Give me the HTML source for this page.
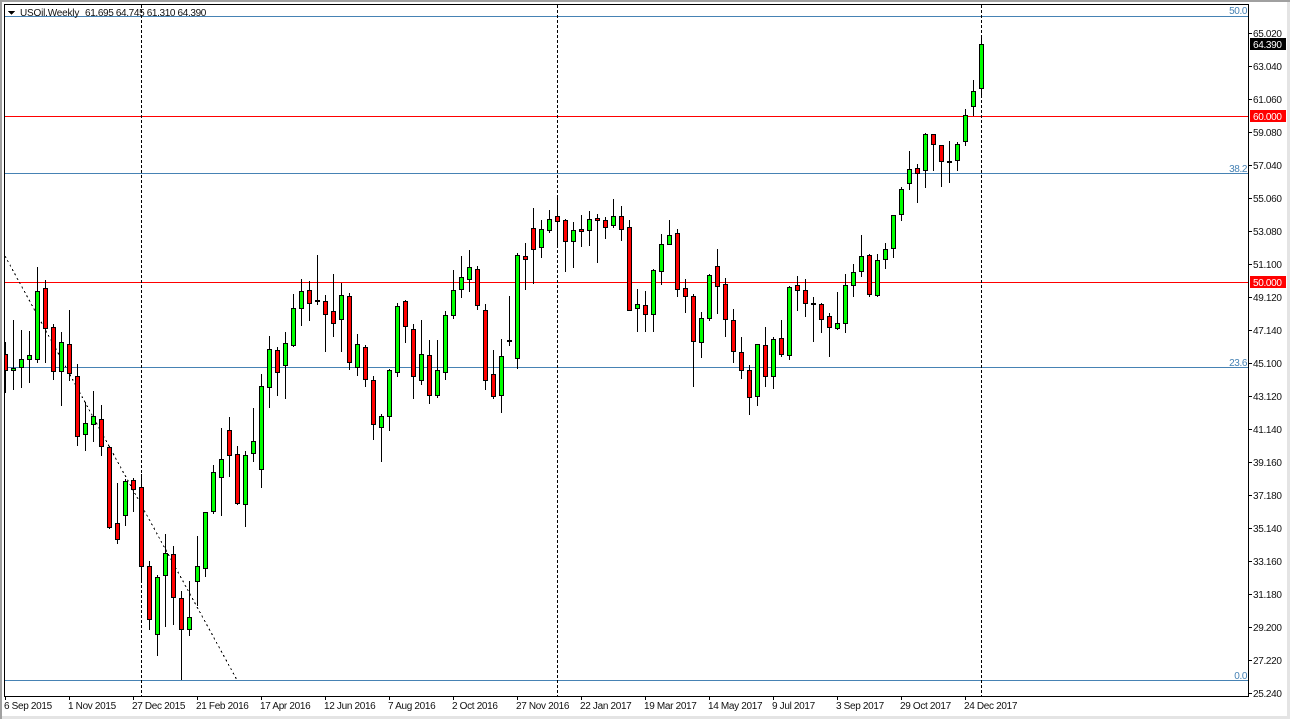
<!DOCTYPE html>
<html><head><meta charset="utf-8"><title>USOil Weekly</title>
<style>
html,body{margin:0;padding:0;background:#fff;width:1290px;height:719px;overflow:hidden}
svg{display:block}
text{font-family:"Liberation Sans",sans-serif;font-size:10px;letter-spacing:-.33px;fill:#111}
.f{fill:#4682b4;text-anchor:end;letter-spacing:-.4px}
.w{fill:#fff}
</style></head><body>
<svg width="1290" height="719" viewBox="0 0 1290 719" xmlns="http://www.w3.org/2000/svg">
<defs><clipPath id="c"><rect x="5" y="5" width="1243" height="691"/></clipPath></defs>
<rect x="0" y="0" width="1290" height="2" fill="#a0a0a0"/>
<rect x="0" y="0" width="2" height="719" fill="#a0a0a0"/>
<rect x="1287" y="2" width="3" height="717" fill="#e4e4e4"/>
<rect x="2" y="716" width="1288" height="3" fill="#e4e4e4"/>
<g shape-rendering="crispEdges" clip-path="url(#c)">
<path d="M5 16.5H1248M5 173.5H1248M5 367.5H1248M5 680.5H1248" stroke="#4682b4" fill="none"/>
<path d="M5 116.5H1248M5 282.5H1248" stroke="#f00" fill="none"/>
<path d="M141.5 5V696M557.5 5V696M981.5 5V696" stroke="#000" stroke-dasharray="3 2" fill="none"/>
<path d="M5 256L237 680" stroke="#000" stroke-dasharray="2 3" fill="none"/>
<path stroke="#000" fill="none" d="M5.5 342V393M13.5 320V390M21.5 330V388M29.5 331V383M37.5 267V363M45.5 280V363M53.5 324V380M61.5 332V406M69.5 310V381M77.5 364V446M85.5 402V451M93.5 391V442M101.5 405V456M109.5 446V529M117.5 483V544M125.5 479V526M133.5 478V512M141.5 474V582M149.5 561V630M157.5 575V656M165.5 534V627M173.5 546V625M181.5 591V680M189.5 581V636M197.5 536V606M205.5 512V577M213.5 465V514M221.5 428V516M229.5 417V477M237.5 446V505M245.5 451V527M253.5 408V462M261.5 374V488M269.5 336V408M277.5 347V396M285.5 332V399M293.5 294V347M301.5 279V326M309.5 281V321M317.5 255V305M325.5 295V352M333.5 274V337M341.5 283V352M349.5 293V370M357.5 334V376M365.5 345V387M373.5 376V440M381.5 414V462M389.5 369V431M397.5 303V377M405.5 300V343M413.5 324V399M421.5 320V385M429.5 340V404M437.5 340V398M445.5 311V380M453.5 270V319M461.5 256V298M469.5 250V292M477.5 266V310M485.5 304V390M493.5 350V399M501.5 339V413M509.5 296V346M517.5 253V369M525.5 243V290M533.5 208V284M541.5 220V258M549.5 210V233M557.5 196V247M565.5 219V272M573.5 222V268M581.5 215V247M589.5 211V246M597.5 214V263M605.5 217V239M613.5 199V228M621.5 206V241M629.5 220V310M637.5 289V332M645.5 291V332M653.5 269V332M661.5 234V285M669.5 220V244M677.5 229V297M685.5 279V313M693.5 294V387M701.5 312V358M709.5 274V321M717.5 249V314M725.5 278V337M733.5 309V363M741.5 337V379M749.5 365V415M757.5 344V406M765.5 327V387M773.5 337V389M781.5 320V357M789.5 286V360M797.5 276V311M805.5 279V317M813.5 297V342M821.5 303V333M829.5 313V357M837.5 292V330M845.5 274V333M853.5 264V297M861.5 235V277M869.5 254V297M877.5 254V297M885.5 243V269M893.5 215V258M901.5 187V221M909.5 151V190M917.5 164V203M925.5 133V188M933.5 134V171M941.5 145V187M949.5 141V183M957.5 142V171M965.5 109V146M973.5 80V116M981.5 38V97"/>
<path stroke="#000" fill="#0f0" d="M11.5 368.5h4v2h-4zM19.5 359.5h4v8h-4zM27.5 355.5h4v4h-4zM35.5 291.5h4v68h-4zM59.5 342.5h4v29h-4zM83.5 423.5h4v11h-4zM91.5 416.5h4v8h-4zM123.5 481.5h4v34h-4zM155.5 577.5h4v57h-4zM163.5 553.5h4v22h-4zM187.5 617.5h4v12h-4zM195.5 566.5h4v15h-4zM203.5 512.5h4v56h-4zM211.5 472.5h4v39h-4zM219.5 459.5h4v18h-4zM243.5 455.5h4v49h-4zM251.5 441.5h4v12h-4zM259.5 386.5h4v83h-4zM267.5 349.5h4v38h-4zM283.5 343.5h4v22h-4zM291.5 308.5h4v37h-4zM299.5 291.5h4v17h-4zM339.5 295.5h4v24h-4zM355.5 344.5h4v23h-4zM379.5 416.5h4v11h-4zM387.5 370.5h4v46h-4zM395.5 306.5h4v66h-4zM419.5 354.5h4v26h-4zM435.5 370.5h4v25h-4zM443.5 315.5h4v57h-4zM451.5 290.5h4v25h-4zM459.5 277.5h4v12h-4zM467.5 267.5h4v12h-4zM499.5 356.5h4v39h-4zM515.5 255.5h4v103h-4zM539.5 229.5h4v18h-4zM547.5 219.5h4v11h-4zM571.5 230.5h4v11h-4zM587.5 219.5h4v11h-4zM611.5 216.5h4v9h-4zM635.5 304.5h4v4h-4zM651.5 270.5h4v44h-4zM659.5 244.5h4v27h-4zM667.5 235.5h4v9h-4zM699.5 318.5h4v24h-4zM707.5 275.5h4v43h-4zM755.5 344.5h4v52h-4zM771.5 339.5h4v37h-4zM787.5 287.5h4v68h-4zM835.5 323.5h4v5h-4zM843.5 285.5h4v38h-4zM851.5 272.5h4v13h-4zM859.5 256.5h4v15h-4zM875.5 260.5h4v35h-4zM883.5 249.5h4v10h-4zM891.5 215.5h4v33h-4zM899.5 189.5h4v25h-4zM907.5 169.5h4v14h-4zM923.5 134.5h4v36h-4zM955.5 144.5h4v16h-4zM963.5 115.5h4v26h-4zM971.5 91.5h4v15h-4zM979.5 44.5h4v44h-4z"/>
<path stroke="#000" fill="#f00" d="M3.5 354.5h4v16h-4zM43.5 288.5h4v40h-4zM51.5 327.5h4v44h-4zM67.5 344.5h4v29h-4zM75.5 376.5h4v60h-4zM99.5 419.5h4v27h-4zM107.5 447.5h4v80h-4zM115.5 523.5h4v16h-4zM131.5 480.5h4v9h-4zM139.5 487.5h4v79h-4zM147.5 566.5h4v53h-4zM171.5 554.5h4v43h-4zM179.5 598.5h4v31h-4zM227.5 430.5h4v25h-4zM235.5 454.5h4v49h-4zM275.5 350.5h4v22h-4zM307.5 290.5h4v13h-4zM323.5 301.5h4v13h-4zM331.5 311.5h4v12h-4zM347.5 296.5h4v66h-4zM363.5 347.5h4v32h-4zM371.5 380.5h4v44h-4zM403.5 301.5h4v25h-4zM411.5 329.5h4v47h-4zM427.5 355.5h4v40h-4zM475.5 269.5h4v36h-4zM483.5 310.5h4v70h-4zM491.5 374.5h4v22h-4zM523.5 256.5h4v3h-4zM531.5 228.5h4v21h-4zM555.5 216.5h4v5h-4zM563.5 220.5h4v21h-4zM579.5 229.5h4v2h-4zM595.5 218.5h4v2h-4zM603.5 220.5h4v7h-4zM619.5 216.5h4v13h-4zM627.5 227.5h4v83h-4zM643.5 305.5h4v9h-4zM675.5 233.5h4v56h-4zM683.5 288.5h4v8h-4zM691.5 296.5h4v45h-4zM715.5 266.5h4v20h-4zM723.5 284.5h4v35h-4zM731.5 320.5h4v31h-4zM739.5 352.5h4v18h-4zM747.5 370.5h4v27h-4zM763.5 345.5h4v31h-4zM779.5 338.5h4v16h-4zM795.5 285.5h4v5h-4zM803.5 290.5h4v13h-4zM819.5 304.5h4v15h-4zM827.5 316.5h4v11h-4zM867.5 255.5h4v39h-4zM915.5 168.5h4v5h-4zM931.5 134.5h4v10h-4zM939.5 145.5h4v16h-4z"/>
<path fill="#000" d="M315 300h5v2h-5zM507 340h5v2h-5zM811 303h5v2h-5zM947 161h5v2h-5z"/>
</g>
<g shape-rendering="crispEdges">
<path stroke="#000" fill="none" d="M4.500 4V697M4 4.500H1249M1248.500 4V697M4 696.500H1249"/>
<path stroke="#000" fill="none" d="M1249 33.500h3M1249 66.500h3M1249 99.500h3M1249 132.500h3M1249 165.500h3M1249 198.500h3M1249 231.500h3M1249 264.500h3M1249 297.500h3M1249 330.500h3M1249 363.500h3M1249 396.500h3M1249 429.500h3M1249 462.500h3M1249 495.500h3M1249 528.500h3M1249 561.500h3M1249 594.500h3M1249 627.500h3M1249 660.500h3M1249 693.500h3"/>
<path stroke="#000" fill="none" d="M5.500 697v3M69.500 697v3M133.500 697v3M197.500 697v3M261.500 697v3M325.500 697v3M389.500 697v3M453.500 697v3M517.500 697v3M581.500 697v3M645.500 697v3M709.500 697v3M773.500 697v3M837.500 697v3M901.500 697v3M965.500 697v3"/>
<rect x="1250" y="38" width="36" height="12" fill="#000"/>
<rect x="1250" y="110" width="36" height="12" fill="#f00"/>
<rect x="1250" y="276" width="36" height="12" fill="#f00"/>
<path d="M8 11h7l-3.500 4z" fill="#000"/>
</g>
<text x="20" y="16" textLength="59">USOil.Weekly</text>
<text x="85" y="16" textLength="121" lengthAdjust="spacing">61.695 64.745 61.310 64.390</text>
<text class="f" x="1247" y="14">50.0</text>
<text class="f" x="1247" y="172">38.2</text>
<text class="f" x="1247" y="366">23.6</text>
<text class="f" x="1247" y="679">0.0</text>
<text x="1253" y="37">65.020</text>
<text class="w" x="1253" y="48">64.390</text>
<text x="1253" y="70">63.040</text>
<text x="1253" y="103">61.060</text>
<text class="w" x="1253" y="120">60.000</text>
<text x="1253" y="136">59.080</text>
<text x="1253" y="169">57.040</text>
<text x="1253" y="202">55.060</text>
<text x="1253" y="235">53.080</text>
<text x="1253" y="268">51.100</text>
<text class="w" x="1253" y="286">50.000</text>
<text x="1253" y="301">49.120</text>
<text x="1253" y="334">47.140</text>
<text x="1253" y="367">45.100</text>
<text x="1253" y="400">43.120</text>
<text x="1253" y="433">41.140</text>
<text x="1253" y="466">39.160</text>
<text x="1253" y="499">37.180</text>
<text x="1253" y="532">35.140</text>
<text x="1253" y="565">33.160</text>
<text x="1253" y="598">31.180</text>
<text x="1253" y="631">29.200</text>
<text x="1253" y="664">27.220</text>
<text x="1253" y="697">25.240</text>
<text x="4" y="709">6 Sep 2015</text>
<text x="68" y="709">1 Nov 2015</text>
<text x="132" y="709">27 Dec 2015</text>
<text x="196" y="709">21 Feb 2016</text>
<text x="260" y="709">17 Apr 2016</text>
<text x="324" y="709">12 Jun 2016</text>
<text x="388" y="709">7 Aug 2016</text>
<text x="452" y="709">2 Oct 2016</text>
<text x="516" y="709">27 Nov 2016</text>
<text x="580" y="709">22 Jan 2017</text>
<text x="644" y="709">19 Mar 2017</text>
<text x="708" y="709">14 May 2017</text>
<text x="772" y="709">9 Jul 2017</text>
<text x="836" y="709">3 Sep 2017</text>
<text x="900" y="709">29 Oct 2017</text>
<text x="964" y="709">24 Dec 2017</text>
</svg>
</body></html>
